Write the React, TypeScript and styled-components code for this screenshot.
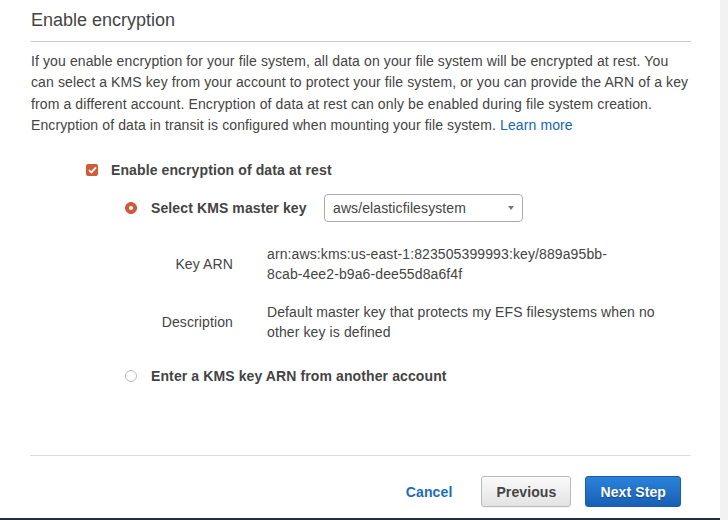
import React from 'react'
import styled, { createGlobalStyle } from 'styled-components'

const GlobalStyle = createGlobalStyle`
  html, body {
    margin: 0;
    padding: 0;
    background: #f2f2f2;
    font-family: "Liberation Sans", Arial, sans-serif;
    color: #444;
  }
`

const Page = styled.div`
  display: flex;
  width: 728px;
  height: 520px;
  overflow: hidden;
`

const Column = styled.div`
  width: 720px;
  display: flex;
  flex-direction: column;
`

const Panel = styled.div`
  flex: 1;
  background: #fff;
  padding: 0 29px 0 31px;
  display: flex;
  flex-direction: column;
  letter-spacing: 0.11px;
`

const DarkBar = styled.div`
  height: 2px;
  background: #232f3e;
`

const Title = styled.h2`
  margin: 0;
  padding: 8px 0 9px;
  font-size: 18px;
  line-height: 24px;
  font-weight: normal;
  letter-spacing: 0;
  color: #444;
  border-bottom: 1px solid #ccc;
`

const Intro = styled.p`
  margin: 9px 0 0;
  font-size: 14px;
  line-height: 21.3px;
`

const Link = styled.a`
  color: #1166bb;
  text-decoration: none;
`

const Options = styled.div`
  padding-left: 55px;
  margin-top: 23px;
  flex: 1;
`

const CheckRow = styled.label`
  display: flex;
  align-items: center;
  gap: 13px;
  height: 21px;
  font-size: 14px;
  font-weight: bold;
`

const Check = styled.span`
  width: 12px;
  height: 12px;
  border-radius: 2px;
  background: #d35a38;
  display: flex;
  align-items: center;
  justify-content: center;
`

const RadioGroup = styled.div`
  padding-left: 39px;
  margin-top: 14px;
`

const RadioRow = styled.div`
  display: flex;
  align-items: center;
  height: 28px;
  font-size: 14px;
  font-weight: bold;
`

const Radio = styled.span<{ checked?: boolean }>`
  width: 12px;
  height: 12px;
  box-sizing: border-box;
  border-radius: 50%;
  margin-right: 14px;
  background: ${({ checked }) => (checked ? '#d35a38' : '#fff')};
  border: 1px solid ${({ checked }) => (checked ? '#c9512f' : '#bbb')};
  display: flex;
  align-items: center;
  justify-content: center;

  &::after {
    content: '';
    display: ${({ checked }) => (checked ? 'block' : 'none')};
    width: 4px;
    height: 4px;
    border-radius: 50%;
    background: #fff;
  }
`

const RadioLabel = styled.span`
  width: 173px;
`

const Select = styled.div`
  width: 199px;
  height: 28px;
  box-sizing: border-box;
  border: 1px solid #aaa;
  border-radius: 4px;
  padding: 0 8px;
  display: flex;
  align-items: center;
  justify-content: space-between;
  font-weight: normal;
  font-size: 14px;
  color: #444;
`

const Caret = styled.span`
  width: 0;
  height: 0;
  border-left: 3.5px solid transparent;
  border-right: 3.5px solid transparent;
  border-top: 4px solid #777;
`

const Details = styled.div`
  display: grid;
  grid-template-columns: 108px 400px;
  column-gap: 34px;
  row-gap: 18px;
  margin: 22px 0 20px;
  font-size: 14px;
  line-height: 20px;
  align-items: center;
`

const DetailLabel = styled.div`
  text-align: right;
`

const DetailValue = styled.div``

const Footer = styled.div`
  border-top: 1px solid #ddd;
  margin-left: -1px;
  padding: 20px 10px 11px 0;
  display: flex;
  justify-content: flex-end;
  align-items: center;
  height: 31px;
`

const CancelLink = styled.a`
  font-size: 14px;
  font-weight: bold;
  color: #1a6bc8;
  margin-right: 15px;
`

const Button = styled.button<{ primary?: boolean }>`
  font-family: "Liberation Sans", Arial, sans-serif;
  font-size: 14px;
  font-weight: bold;
  letter-spacing: 0.11px;
  height: 31px;
  padding: 0 14px;
  margin-left: 14px;
  border-radius: 3px;
  cursor: pointer;
  color: ${({ primary }) => (primary ? '#fff' : '#444')};
  border: 1px solid ${({ primary }) => (primary ? '#1b5aa6' : '#bbb')};
  background: ${({ primary }) =>
    primary
      ? 'linear-gradient(#2b82d9, #1760b7)'
      : 'linear-gradient(#fafafa, #e3e3e3)'};
  text-shadow: ${({ primary }) => (primary ? '0 1px 1px rgba(0,0,0,0.35)' : 'none')};
  box-shadow: ${({ primary }) => (primary ? 'none' : '0 1px 0 rgba(0,0,0,0.05)')};
`

const App = () => {
  return (
    <Page>
      <GlobalStyle />
      <Column>
        <Panel>
          <Title>Enable encryption</Title>
          <Intro>
            If you enable encryption for your file system, all data on your file system will be
            encrypted at rest. You can select a KMS key from your account to protect your file
            system, or you can provide the ARN of a key from a different account. Encryption of
            data at rest can only be enabled during file system creation. Encryption of data in
            transit is configured when mounting your file system. <Link>Learn more</Link>
          </Intro>
          <Options>
            <CheckRow>
              <Check>
                <svg width="9" height="8" viewBox="0 0 9 8">
                  <path d="M1 4.2 L3.4 6.4 L8 1.4" fill="none" stroke="#fff" strokeWidth="1.8" />
                </svg>
              </Check>
              Enable encryption of data at rest
            </CheckRow>
            <RadioGroup>
              <RadioRow>
                <Radio checked />
                <RadioLabel>Select KMS master key</RadioLabel>
                <Select>
                  aws/elasticfilesystem
                  <Caret />
                </Select>
              </RadioRow>
              <Details>
                <DetailLabel>Key ARN</DetailLabel>
                <DetailValue>
                  arn:aws:kms:us-east-1:823505399993:key/889a95bb-
                  <br />
                  8cab-4ee2-b9a6-dee55d8a6f4f
                </DetailValue>
                <DetailLabel>Description</DetailLabel>
                <DetailValue>
                  Default master key that protects my EFS filesystems when no other key is defined
                </DetailValue>
              </Details>
              <RadioRow>
                <Radio />
                <span>Enter a KMS key ARN from another account</span>
              </RadioRow>
            </RadioGroup>
          </Options>
          <Footer>
            <CancelLink>Cancel</CancelLink>
            <Button>Previous</Button>
            <Button primary>Next Step</Button>
          </Footer>
        </Panel>
        <DarkBar />
      </Column>
    </Page>
  )
}

export default App
